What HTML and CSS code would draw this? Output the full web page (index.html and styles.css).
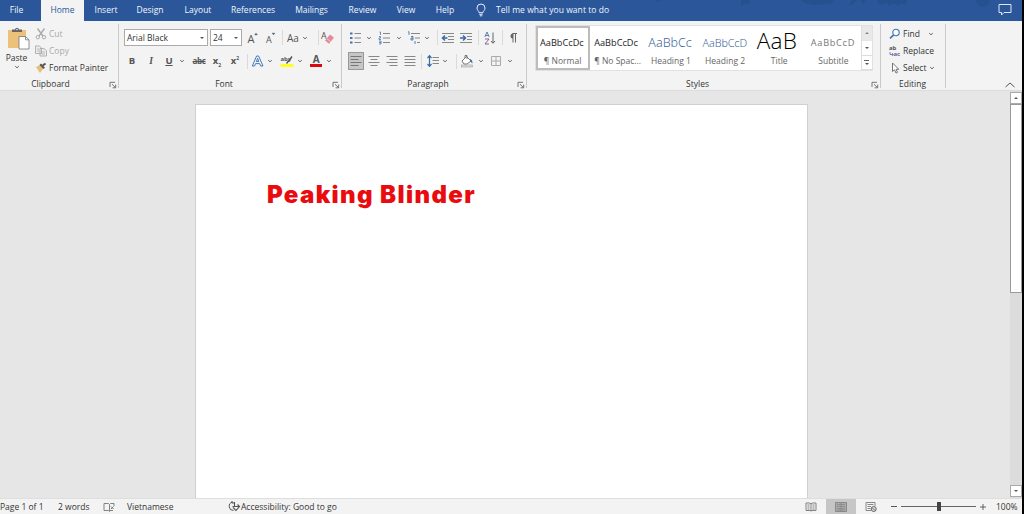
FILE: index.html
```html
<!DOCTYPE html>
<html lang="en">
<head>
<meta charset="utf-8">
<title>Word</title>
<link rel="stylesheet" href="styles.css">
</head>
<body>
<svg class="defs" aria-hidden="true">
  <symbol id="caret" viewBox="0 0 8 8"><path d="M2.2 3.2 4 4.8 5.8 3.2" fill="none" stroke="#666" stroke-width="1"/></symbol>
  <symbol id="launch" viewBox="0 0 8 8"><path d="M1 6V1.3h5M3 3.2l3.4 3.3M6.7 3.6v3.2H3.6" fill="none" stroke="#666" stroke-width=".9"/></symbol>
</svg>
<div class="window">
  <header class="tabs">
    <a class="tab file">File</a><a class="tab home">Home</a><a class="tab insert">Insert</a><a class="tab design">Design</a><a class="tab layout">Layout</a><a class="tab references">References</a><a class="tab mailings">Mailings</a><a class="tab review">Review</a><a class="tab view">View</a><a class="tab help">Help</a>
    <svg class="bulb" viewBox="0 0 12 14"><path d="M4 9.7C4 8 2 7.400 2 5a4 4 0 0 1 8 0c0 2.400-2 3-2 4.700zM4.300 11.300h3.400M4.800 12.800h2.400" fill="none" stroke="#e8eef8" stroke-width="1"/></svg>
    <span class="tell">Tell me what you want to do</span>
    <svg class="cloud" viewBox="0 0 290 21"><g fill="#264d8a" opacity=".75"><path d="M-10 0h6l-3 2zM76 0h8l1 5-4-1.500-5 2.500zM136 0h33c0 4-5 5-9 4-8 2-20 1-24-4zM187 0h5l-5 5-3 0zM196 0h5l-3 4zM212 0h30l-1 5-5-2-3 3-4-3-5 3-2-3-7 2zM311 0h14q-1 7-7 7t-7-7z"/></g></svg>
    <svg class="comment" viewBox="0 0 14 13"><path d="M1 1.500h12v8H6l-2.500 2.500V9.500H1z" fill="none" stroke="#dce6f5"/></svg>
  </header>

  <section class="ribbon">
    <div class="group clipboard">
      <div class="body">
        <div class="paste">
          <svg width="23" height="24" viewBox="0 0 23 24"><rect x="1" y="3" width="18" height="18" fill="#ecc27a"/><path d="M5 5V2.500h3Q8.200.7 10 .7t2 1.800h3V5z" fill="#666"/><circle cx="10" cy="2.500" r=".8" fill="#eee"/><path d="M12 9.500h6.500l3.500 3.300V22H12z" fill="#fff" stroke="#777" stroke-width=".8"/><path d="M18.500 9.500v3.300H22" fill="none" stroke="#777" stroke-width=".8"/></svg>
          <span>Paste</span>
          <svg width="8" height="8"><use href="#caret"/></svg>
        </div>
        <div class="commands">
          <div class="cmd off"><svg width="12" height="12" viewBox="0 0 12 12"><path d="M2.500.5 8 8M9.500.5 4 8" stroke="#aaa" stroke-width="1.400"/><circle cx="2.800" cy="9.200" r="1.700" fill="none" stroke="#aaa"/><circle cx="9" cy="9.200" r="1.700" fill="none" stroke="#aaa"/></svg><span>Cut</span></div>
          <div class="cmd off"><svg width="12" height="12" viewBox="0 0 12 12"><path d="M.5 1h4l2 2v5.500h-6zM5 3.500h4l2.500 2.200V11H5z" fill="#eee" stroke="#aaa" stroke-width=".9"/><path d="M2 4h2M2 6h2M6.500 7H10M6.500 9H10" stroke="#aaa" stroke-width=".8"/></svg><span>Copy</span></div>
          <div class="cmd"><svg width="12" height="12" viewBox="0 0 12 12"><path d="m1 5 4-2 3 4-3 4z" fill="#e8bd75"/><path d="M4.500 3 6 1.500l4 4.200L8.300 7z" fill="#555"/><path d="m7.800 3.500 2.700-2" stroke="#555" stroke-width="2"/></svg><span>Format Painter</span></div>
        </div>
      </div>
      <div class="label"><span>Clipboard</span><svg class="launch"><use href="#launch"/></svg></div>
    </div>

    <div class="group font">
      <div class="body rows">
        <div class="row">
          <div class="combo name"><span>Arial Black</span><i class="tri"></i></div>
          <div class="combo size s3"><span>24</span><i class="tri"></i></div>
          <svg class="c14 s4" viewBox="0 0 14 14"><text x="1.500" y="12" class="g g11">A</text><path d="m8.700 3.800 1.300-1.600 1.300 1.600z" fill="#456" stroke="#456" stroke-width=".5"/></svg>
          <svg class="c14 s4" viewBox="0 0 14 14"><text x="2" y="12" class="g g9">A</text><path d="m8.200 2.200 1.300 1.600 1.300-1.600z" fill="#456" stroke="#456" stroke-width=".5"/></svg>
          <i class="sep s4"></i>
          <svg class="c14 s3" viewBox="0 0 14 14"><text x="1" y="11" class="g g10">Aa</text></svg>
          <svg class="c8 s1"><use href="#caret"/></svg>
          <i class="sep s9"></i>
          <svg class="c14 s1" viewBox="0 0 14 14"><text x="1" y="8" class="g g9">A</text><path d="m5 9.500 5-6 4 3.200-5 6z" fill="#e58a97"/><path d="m6.700 7.500 4 3.200" stroke="#f7d5da" stroke-width=".8"/></svg>
        </div>
        <div class="row second">
          <b class="c16 ltr">B</b><i class="c16 s3 ltr ital">I</i><u class="c16 s2 ltr">U</u>
          <svg class="c8 s1"><use href="#caret"/></svg>
          <s class="c16 s5 ltr strike">abc</s>
          <span class="c16 s2 ltr">x<sub>2</sub></span><span class="c16 s2 ltr">x<sup>2</sup></span>
          <i class="sep s4"></i>
          <svg class="c14 s3" viewBox="0 0 14 14"><path d="M1.300 12 5.600 2h2L12 12H9.600L8.700 9.600H4.500L3.600 12zM5.300 7.600h2.600L6.600 4.300z" fill="#f3f8ff" stroke="#4679b5" stroke-width="1"/></svg>
          <svg class="c8 s1"><use href="#caret"/></svg>
          <svg class="c16 s5" viewBox="0 0 16 14"><rect x="1.500" y="10" width="13" height="3" fill="#ff2"/><text x="1.500" y="7" class="g g7 bold">aby</text><path d="m7.500 9.500 5.500-7" stroke="#555" stroke-width="1.400"/></svg>
          <svg class="c8 s1"><use href="#caret"/></svg>
          <svg class="c16 s4" viewBox="0 0 16 14"><rect x="2" y="10" width="12" height="3" fill="#d9090f"/><text x="4.700" y="9" class="g g10 bold">A</text></svg>
          <svg class="c8 s1"><use href="#caret"/></svg>
        </div>
      </div>
      <div class="label"><span>Font</span><svg class="launch"><use href="#launch"/></svg></div>
    </div>

    <div class="group para">
      <div class="body rows">
        <div class="row">
          <svg class="c16" viewBox="0 0 16 14"><path d="M2 2.500h2.500M2 7h2.500M2 11.500h2.500" stroke="#4d73a8" stroke-width="2"/><path d="M6.500 2.500H13M6.500 7H13M6.500 11.500H13" stroke="#888"/></svg>
          <svg class="c8 s1"><use href="#caret"/></svg>
          <svg class="c16 s4" viewBox="0 0 16 14"><path d="M2.500 1h1v3M2 5.500h1.500v1.500H2v1.500h2M2 10h2v3H2M2 11.500h2" fill="none" stroke="#4d73a8" stroke-width=".8"/><path d="M6 2.500h7M6 7h7M6 11.500h7" stroke="#888"/></svg>
          <svg class="c8 s2"><use href="#caret"/></svg>
          <svg class="c16 s3" viewBox="0 0 16 14"><path d="M2 .8h1v3M5 5.500h2V9H5V7h2M9 10v3" fill="none" stroke="#4d73a8" stroke-width=".9"/><path d="M5 2.500h9M9 7h5M11 11.500h3" stroke="#888"/></svg>
          <svg class="c8 s1"><use href="#caret"/></svg>
          <i class="sep s6"></i>
          <svg class="c16 s2" viewBox="0 0 16 14"><path d="M2 2.500h12M8 5.500h6M8 8.500h6M2 11.500h12" stroke="#888"/><path d="M7.500 7H3M5 4.500 2.500 7 5 9.500" fill="none" stroke="#396aa5" stroke-width="1.500"/></svg>
          <svg class="c16 s2" viewBox="0 0 16 14"><path d="M2 2.500h12M9 5.500h5M9 8.500h5M2 11.500h12" stroke="#888"/><path d="M2 7h5M5 4.500 7.500 7 5 9.500" fill="none" stroke="#396aa5" stroke-width="1.500"/></svg>
          <i class="sep s4"></i>
          <svg class="c16 s3" viewBox="0 0 16 14"><path d="m2.800 6 2.200-5 2.200 5M3.500 4.500h3" fill="none" stroke="#4d73a8" stroke-width=".9"/><path d="M3 8h4l-4 5h4" fill="none" stroke="#7b598e" stroke-width=".9"/><path d="M11 1.500V12M9 10l2 2.300L13 10" fill="none" stroke="#666"/></svg>
          <i class="sep s4"></i>
          <svg class="c16 s2" viewBox="0 0 16 14"><path d="M8 2.500a2.500 2.500 0 0 0 0 5z" fill="#666"/><path d="M7.500 2.500H12M8 2.500v9M10.500 2.500v9" stroke="#666" fill="none"/></svg>
        </div>
        <div class="row second">
          <svg class="c16 pressed" viewBox="0 0 16 18"><path d="M2.500 4.500h11M2.500 7.500h8M2.500 10.500h11M2.500 13.500h8" stroke="#777"/></svg>
          <svg class="c16 s2" viewBox="0 0 16 14"><path d="M2.500 2.500h11M4.500 5.500h7M2.500 8.500h11M4.500 11.500h7" stroke="#888"/></svg>
          <svg class="c16 s2" viewBox="0 0 16 14"><path d="M2.500 2.500h11M5.500 5.500h8M2.500 8.500h11M5.500 11.500h8" stroke="#888"/></svg>
          <svg class="c16 s2" viewBox="0 0 16 14"><path d="M2.500 2.500h11M2.500 5.500h11M2.500 8.500h11M2.500 11.500h11" stroke="#888"/></svg>
          <i class="sep s3"></i>
          <svg class="c16 s3" viewBox="0 0 16 14"><path d="M7.500 3.500H14M7.500 6.500H14M7.500 9.500H14" stroke="#888"/><path d="M4.500 2v10M2.500 4l2-2.300L6.500 4M2.500 10l2 2.300 2-2.300" fill="none" stroke="#396aa5" stroke-width="1.200"/></svg>
          <svg class="c8"><use href="#caret"/></svg>
          <i class="sep s7"></i>
          <svg class="c16 s2" viewBox="0 0 16 14"><path d="m3 7 4.500-4.500L12 7 8 10H5z" fill="#fff" stroke="#777"/><path d="M6 4V1.500h2V5" fill="none" stroke="#777"/><path d="M11 5q3 1 2.300 4.500L11 7z" fill="#396aa5"/><rect x="2.500" y="11" width="11" height="2" fill="#ddd" stroke="#999" stroke-width=".6"/></svg>
          <svg class="c8 s2"><use href="#caret"/></svg>
          <svg class="c16 s3" viewBox="0 0 16 14"><path d="M3.500 2.500h9v9h-9zM8 2.500v9M3.500 7h9" fill="none" stroke="#aaa"/></svg>
          <svg class="c8 s2"><use href="#caret"/></svg>
        </div>
      </div>
      <div class="label"><span>Paragraph</span><svg class="launch"><use href="#launch"/></svg></div>
    </div>

    <div class="group styles">
      <div class="body">
        <div class="gallery">
          <div class="style chosen"><div class="sample p1">AaBbCcDc</div><div class="cap">¶ Normal</div></div>
          <div class="style"><div class="sample p1">AaBbCcDc</div><div class="cap">¶ No Spac...</div></div>
          <div class="style"><div class="sample p2">AaBbCc</div><div class="cap">Heading 1</div></div>
          <div class="style"><div class="sample p3">AaBbCcD</div><div class="cap">Heading 2</div></div>
          <div class="style"><div class="sample p4">AaB</div><div class="cap">Title</div></div>
          <div class="style"><div class="sample p5">AaBbCcD</div><div class="cap">Subtitle</div></div>
          <div class="scroller"><div class="dim"><i class="tri up"></i></div><div><i class="tri"></i></div><div class="more"><i class="tri"></i></div></div>
        </div>
      </div>
      <div class="label"><span>Styles</span><svg class="launch"><use href="#launch"/></svg></div>
    </div>

    <div class="group editing">
      <div class="body">
        <div class="commands">
          <div class="cmd"><svg width="12" height="12" viewBox="0 0 12 12"><circle cx="7" cy="4.500" r="3.200" fill="#f8fbff" stroke="#3f73b0" stroke-width="1.100"/><path d="M4.700 6.800 1 10.300" stroke="#3f73b0" stroke-width="1.600"/></svg><span>Find</span><svg class="c8 s5"><use href="#caret"/></svg></div>
          <div class="cmd"><svg width="12" height="12" viewBox="0 0 12 12"><text x="0" y="5" class="g g7 bold">ab</text><text x="4.500" y="11" class="g g7 bold purple">ac</text><path d="M1 7v2.500h3M3 8l1.300 1.500L3 11" fill="none" stroke="#3f73b0" stroke-width=".8"/></svg><span>Replace</span></div>
          <div class="cmd"><svg width="12" height="12" viewBox="0 0 12 12"><path d="M3.500 1v8.500l2-1.700L7 11l1.500-.7-1.400-3h2.700z" fill="#fff" stroke="#666" stroke-width=".9"/></svg><span>Select</span><svg class="c8"><use href="#caret"/></svg></div>
        </div>
      </div>
      <div class="label"><span>Editing</span></div>
    </div>
    <svg class="collapse" viewBox="0 0 12 8"><path d="m1.500 6 4.500-4 4.500 4" fill="none" stroke="#555"/></svg>
  </section>

  <main class="workspace">
    <article class="page"><h1>Peaking Blinder</h1></article>
    <div class="scrollbar"><div class="btn"><i class="tri up"></i></div><div class="thumb"></div><div class="btn down"><i class="tri"></i></div></div>
  </main>

  <footer class="status">
    <span class="pg">Page 1 of 1</span><span class="words">2 words</span>
    <svg class="book" viewBox="0 0 12 10"><path d="M5.500 1.500H1v7h4.500l1 1V2.500zM6.500 2.500l1-1H11V4M6.500 8.500H10" fill="none" stroke="#777" stroke-width=".9"/><path d="m8 4.500 2.500 2.500m0-2.500L8 7" stroke="#777"/></svg>
    <span class="lang">Vietnamese</span>
    <svg class="acc" viewBox="0 0 12 11"><path d="M4.500 1.200A4.200 4.200 0 0 0 5.500 9.500M3 1h2v2" fill="none" stroke="#555"/><path d="M6.500 1v4M4.500 5.500h6.500M9.500 3.500 11.500 5.500 8 9.500 5 6.500" fill="none" stroke="#555" stroke-width="1.100"/></svg>
    <span class="good">Accessibility: Good to go</span>
    <div class="views">
      <div class="mode"><svg viewBox="0 0 12 10"><path d="M1 1h4l1 1v7L5 8.500H1zM6 2l1-1h4v7.500H7L6 9M2.500 3h2M2.500 5h2M2.500 7h2M7.500 3h2M7.500 5h2M7.500 7h2" fill="none" stroke="#777" stroke-width=".9"/></svg></div>
      <div class="mode on"><svg viewBox="0 0 12 10"><path d="M.5.5h11v9H.5z" fill="#aaa" stroke="#888"/><path d="M2 2.500h8M2 4.500h8M2 6.500h8M2 8h8M6 1v8" stroke="#888" stroke-width=".8"/></svg></div>
      <div class="mode"><svg viewBox="0 0 12 10"><path d="M6 8.500H1v-8h9V4M2.500 2.500h6M2.500 4.500H6M2.500 6.500h3" fill="none" stroke="#888"/><circle cx="8.700" cy="7" r="2.500" fill="#ddd" stroke="#666"/><path d="m7 5.500 3 3" stroke="#666"/></svg></div>
    </div>
    <span class="minus"></span>
    <div class="zoombar"><i class="knob"></i></div>
    <svg class="plus" viewBox="0 0 6 6"><path d="M3 0v6M0 3h6" stroke="#555" stroke-width=".9"/></svg>
    <span class="pct">100%</span>
  </footer>
</div>
</body>
</html>
```
FILE: styles.css
```css
* { box-sizing: border-box; }
body { margin: 0; background: #000; font: 8.500px/12px "Open Sans", sans-serif; color: #333; overflow: hidden; }
.defs { display: none; }
.window { width: 1022px; height: 514px; display: flex; flex-direction: column; background: #e6e6e6; }
svg { display: block; flex: none; overflow: visible; }
span { white-space: nowrap; }

.tabs { height: 21px; flex: none; display: flex; background: #2b579a; color: #f1f5fb; overflow: hidden; }
.tab { line-height: 20px; text-align: center; }
.file { width: 33px; margin-right: 8px; }
.home { width: 43px; background: #f3f3f3; color: #2b579a; }
.insert, .design, .view { width: 44px; }
.layout { width: 52px; }
.references { width: 58px; }
.mailings { width: 59px; }
.review { width: 43px; }
.help { width: 34px; }
.bulb { width: 12px; height: 14px; margin: 3px 9px 0 13px; }
.tell { line-height: 20px; width: 124px; letter-spacing: .05px; }
.cloud { width: 290px; height: 21px; margin-left: 45px; }
.comment { width: 14px; height: 13px; margin: 3px 0 0 43px; }

.ribbon { height: 70px; flex: none; display: flex; background: #f3f3f3; border-bottom: 1px solid #dcdcdc; border-top: 1px solid #edf4f7; }
.group { display: flex; flex-direction: column; border-right: 1px solid #c9c9c9; margin: 2px 0; padding-top: 1px; }
.clipboard { width: 119px; }
.font { width: 223px; }
.para { width: 185px; }
.styles { width: 354px; }
.editing { width: 65px; }
.body { height: 52px; flex: none; display: flex; }
.label { height: 11px; display: flex; padding-right: 1px; }
.label span { flex: 1; text-align: center; line-height: 13px; padding-right: 3px; }
.launch { width: 8px; height: 8px; margin-top: 4px; }
.clipboard .label span { padding-right: 8px; }

.paste { width: 33px; display: flex; flex-direction: column; align-items: center; padding-top: 2px; }
.paste svg:first-child { margin-left: 3px; }
.paste span { line-height: 11px; margin-top: 1px; }
.commands { display: flex; flex-direction: column; padding-left: 2px; }
.cmd { height: 17px; display: flex; align-items: center; gap: 2px; }
.cmd span { line-height: 13px; margin-top: -1px; }
.off { color: #aaa; }
.editing .commands { padding-left: 8px; }
.editing .label span { padding-right: 0; }

.rows { flex-direction: column; padding: 4px 0 0 5px; }
.para .rows { padding-left: 6px; }
.row { height: 17px; display: flex; align-items: center; }
.second { margin-top: 6px; height: 18px; }
.combo { height: 17px; background: #fff; border: 1px solid #ababab; display: flex; align-items: center; justify-content: space-between; padding: 1px 3px 0 2px; }
.name { width: 84px; margin-right: -1px; }
.size { width: 32px; }
.tri { width: 0; height: 0; border: 2px solid transparent; border-top: 2.500px solid #555; border-bottom: 0; }
.tri.up { border-top: 0; border-bottom: 2.500px solid #555; }
.c8 { width: 8px; height: 8px; }
.c14 { width: 14px; height: 14px; }
.c16 { width: 16px; height: 14px; }
.s1 { margin-left: 1px; } .s2 { margin-left: 2px; } .s3 { margin-left: 3px; }
.s4 { margin-left: 4px; } .s5 { margin-left: 5px; } .s6 { margin-left: 6px; }
.s7 { margin-left: 7px; } .s9 { margin-left: 9px; }
.sep { width: 1px; height: 15px; background: #dadada; }
.pressed { height: 18px; background: #c6c6c6; outline: 1px solid #9a9a9a; outline-offset: -1px; }
.ltr { text-align: center; line-height: 14px; font-weight: 700; font-size: 9.500px; color: #555; }
.ital { font-family: "Liberation Serif", serif; }
.strike { font-size: 8px; letter-spacing: -.4px; }
.ltr sub, .ltr sup { font-size: 5px; line-height: 0; }
.g { font-family: "Open Sans", sans-serif; fill: #555; }
.g7 { font-size: 6px; } .g9 { font-size: 9px; } .g10 { font-size: 10px; } .g11 { font-size: 11px; }
.bold { font-weight: 700; }
.purple { fill: #7b598e; }

.gallery { display: flex; width: 338px; height: 46px; margin: 0 0 0 8px; background: #fff; border: 1px solid #e1e1e1; }
.style { width: 54.200px; text-align: center; padding: 7px 5px 0 4px; color: #666; }
.chosen { outline: 2px solid #bcbcbc; outline-offset: -2px; }
.sample { height: 20px; line-height: 20px; white-space: nowrap; color: #222; text-align: left; }
.p1 { font-size: 9.200px; }
.p2 { font-size: 12.500px; color: #3f689b; }
.p3 { font-size: 10.800px; color: #3f689b; letter-spacing: -.1px; }
.p2, .p3 { font-family: "Noto Sans", sans-serif; font-weight: 300; }
.p4 { font-size: 22.500px; color: #000; font-weight: 300; line-height: 15px; letter-spacing: .3px; }
.p5 { font-size: 9.200px; color: #777; letter-spacing: .7px; }
.cap { line-height: 16px; white-space: nowrap; }
.scroller { width: 11px; height: 44px; border-left: 1px solid #ddd; display: grid; grid-template-rows: 15px 15px 14px; }
.scroller div { display: grid; place-content: center; border-bottom: 1px solid #ddd; }
.scroller .dim { background: #e1e1e1; opacity: .7; }
.scroller .more::before { content: ""; width: 5px; height: 1px; background: #666; margin: 0 0 2px -.5px; }
.collapse { width: 12px; height: 8px; margin: 59px 0 0 58px; }

.workspace { flex: 1; display: flex; justify-content: space-between; min-height: 0; }
.page { width: 613px; margin: 13px 0 0 195px; background: #fff; border: 1px solid #d0d0d0; border-bottom: 0; padding: 73px 0 0 71px; }
h1 { margin: 0; font: 900 24px/34px Inter, sans-serif; color: #e90b0e; white-space: nowrap; letter-spacing: 1.370px; }
.scrollbar { width: 12px; background: #dcdcdc; display: flex; flex-direction: column; padding: 1px 0; }
.btn { height: 12px; background: #fff; border: 1px solid #aaa; display: grid; place-content: center; }
.thumb { height: 189px; background: #fff; border: 1px solid #999; }
.down { margin-top: auto; }

.status { height: 16px; flex: none; background: #f3f3f3; border-top: 1px solid #dedede; display: flex; align-items: center; line-height: 15px; }
.pg { width: 58px; }
.words { width: 45px; }
.book { width: 12px; height: 10px; margin-right: 12px; }
.lang { width: 101px; }
.acc { width: 12px; height: 11px; margin-right: 1px; }
.good { width: 556px; }
.views { display: flex; margin-left: -1px; margin-right: 1px; }
.mode { width: 30px; height: 15px; display: grid; place-content: center; }
.mode svg { width: 12px; height: 10px; }
.on { background: #c6c6c6; }
.minus { width: 6px; height: 1px; background: #555; margin-left: 4px; }
.zoombar { width: 75px; height: 1px; background: #666; margin: 0 4px; display: flex; align-items: center; }
.knob { width: 4px; height: 9px; background: #444; margin-left: 36px; }
.plus { width: 6px; height: 6px; }
.pct { margin-left: 10px; }
```
